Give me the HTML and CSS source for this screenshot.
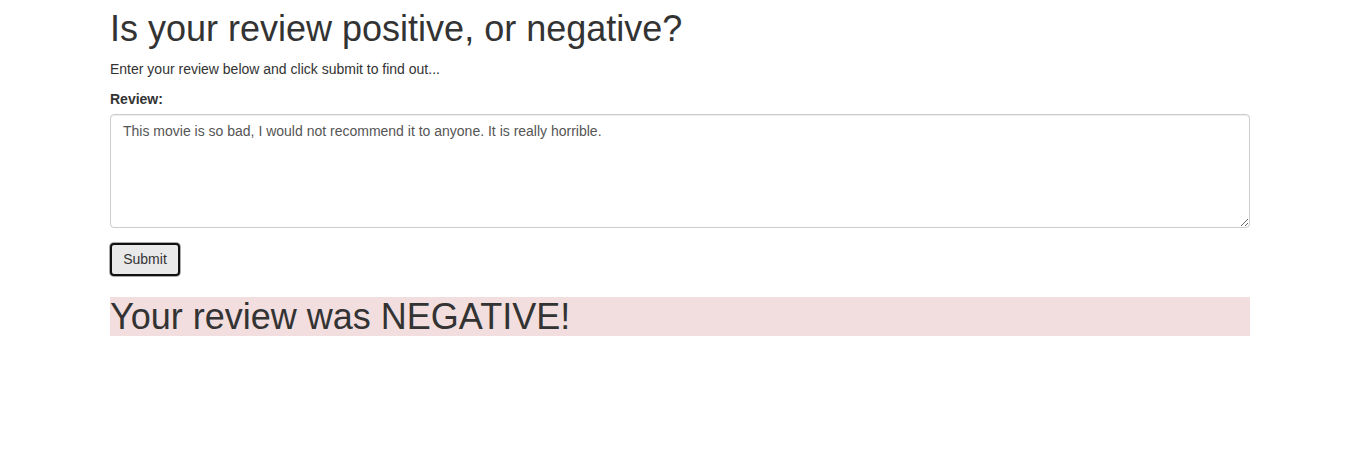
FILE: index.html
```html
<!DOCTYPE html>
<html>
<head>
<meta charset="utf-8">
<link rel="stylesheet" href="styles.css">
</head>
<body>
<div class="container">
  <h1 class="title">Is your review positive, or negative?</h1>
  <p class="lead-text">Enter your review below and click submit to find out...</p>
  <form class="review-form">
    <div class="form-group">
      <label class="label" for="review">Review:</label>
      <textarea id="review" class="form-control" rows="5">This movie is so bad, I would not recommend it to anyone. It is really horrible.</textarea>
    </div>
    <button type="button" class="submit-btn">Submit</button>
  </form>
  <h1 class="result negative">Your review was NEGATIVE!</h1>
</div>
</body>
</html>
```

FILE: styles.css
```css
* { box-sizing: border-box; }
html, body { margin: 0; padding: 0; background: #fff; }
body {
  font-family: "Liberation Sans", Arial, Helvetica, sans-serif;
  font-size: 14px;
  line-height: 20px;
  color: #333;
}
.container {
  width: 1140px;
  margin-left: 110px;
  padding-top: 9px;
}
.title {
  font-size: 36px;
  font-weight: 500;
  line-height: 1.1;
  margin: 0 0 10px;
}
.lead-text {
  margin: 0 0 10px;
}
.review-form { margin: 0; }
.form-group { margin-bottom: 15px; }
.label {
  display: block;
  font-weight: bold;
  margin-bottom: 5px;
}
.form-control {
  display: block;
  width: 100%;
  height: 114px;
  padding: 6px 12px;
  font-family: "Liberation Sans", Arial, Helvetica, sans-serif;
  font-size: 14px;
  line-height: 20px;
  color: #555;
  background: #fff;
  border: 1px solid #ccc;
  border-radius: 4px;
  box-shadow: inset 0 1px 1px rgba(0,0,0,.075);
  resize: vertical;
  margin: 0;
}
.submit-btn {
  display: block;
  width: 70px;
  height: 33px;
  padding: 0;
  font-family: "Liberation Sans", Arial, Helvetica, sans-serif;
  font-size: 14px;
  color: #333;
  background: #e9e9e9;
  border: 2px solid #111;
  border-radius: 4px;
  box-shadow: 0 0 0 1px #aaa;
  margin: 0;
}
.result {
  font-size: 36px;
  font-weight: 500;
  line-height: 1.1;
  margin: 21px 0 10px;
}
.negative { background: #f2dede; }
```
